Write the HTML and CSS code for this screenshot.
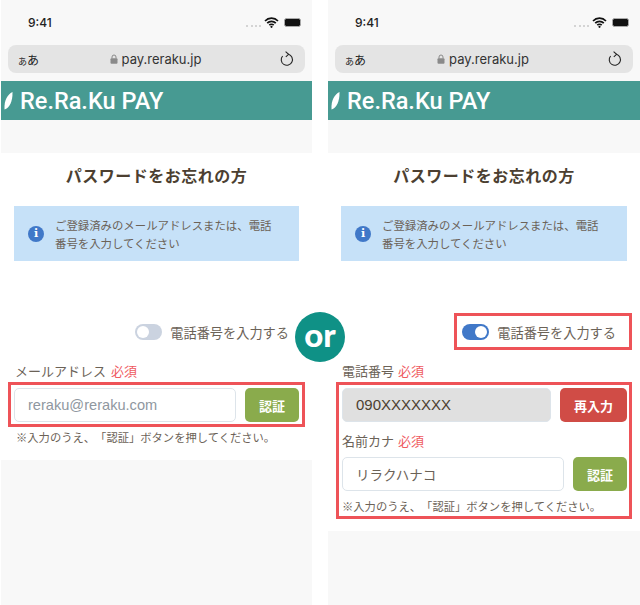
FILE: index.html
```html
<!DOCTYPE html>
<html lang="ja">
<head>
  <title>パスワードをお忘れの方</title>
  <meta name="viewport" content="width=device-width, initial-scale=1.0">
  <link rel="stylesheet" href="styles.css">
</head>
<body>
  <div class="screens">

    <!-- email -->
    <section class="phone phone-left">
      <div class="status">
        <span class="clock">9:41</span>
        <span class="status-icons">
          <span class="dots"></span>
          <svg width="15" height="11" viewBox="0 0 15 11"><path d="M1 4 A9 9 0 0 1 14 4 M3.2 6.2 A6 6 0 0 1 11.8 6.2 M5.3 8.2 A3 3 0 0 1 9.7 8.2" fill="none" stroke="#111" stroke-width="1.7"/><circle cx="7.5" cy="9.8" r="1.1" fill="#111"/></svg>
          <span class="battery"></span>
        </span>
      </div>
      <div class="urlbar">
        <span class="aa"><small>あ</small>あ</span>
        <span class="url">
          <svg width="8" height="10" viewBox="0 0 8 10"><path d="M2 4.5V3a2 2 0 0 1 4 0v1.5" fill="none" stroke="#8a8a8a" stroke-width="1"/><rect x="0.5" y="4.2" width="7" height="5.5" rx="1" fill="#8a8a8a"/></svg>
          pay.reraku.jp
        </span>
        <svg class="reload" width="14" height="16" viewBox="0 0 14 16"><path d="M8.4 3.3 A5.6 5.6 0 1 1 2.6 5" fill="none" stroke="#222" stroke-width="1.1"/><path d="M5.6 0.6 L8.6 3.3 L5.8 5.8" fill="none" stroke="#222" stroke-width="1.1"/></svg>
      </div>
      <header class="brand">
        <svg width="9" height="18" viewBox="0 0 9 18"><path d="M8.5 0 C3.5 2.5 0 8 0.5 17.5 C5.5 16 8.8 9.5 8.5 0Z" fill="#fff"/></svg>
        <span>Re.Ra.Ku PAY</span>
      </header>
      <div class="gap"></div>
      <main class="content">
        <h1>パスワードをお忘れの方</h1>
        <div class="notice">
          <span class="notice-icon">i</span>
          <p>ご登録済みのメールアドレスまたは、電話番号を入力してください</p>
        </div>
        <div class="form">
          <div class="toggle-row">
            <span class="toggle"></span>
            <span class="toggle-text">電話番号を入力する</span>
          </div>
          <div class="label">メールアドレス<em>必須</em></div>
          <div class="marked">
            <div class="field">
              <div class="input placeholder">reraku@reraku.com</div>
              <button class="btn btn-green">認証</button>
            </div>
          </div>
          <p class="hint">※入力のうえ、「認証」ボタンを押してください。</p>
        </div>
      </main>
      <div class="rest"></div>
    </section>

    <!-- phone number -->
    <section class="phone phone-right">
      <div class="status">
        <span class="clock">9:41</span>
        <span class="status-icons">
          <span class="dots"></span>
          <svg width="15" height="11" viewBox="0 0 15 11"><path d="M1 4 A9 9 0 0 1 14 4 M3.2 6.2 A6 6 0 0 1 11.8 6.2 M5.3 8.2 A3 3 0 0 1 9.7 8.2" fill="none" stroke="#111" stroke-width="1.7"/><circle cx="7.5" cy="9.8" r="1.1" fill="#111"/></svg>
          <span class="battery"></span>
        </span>
      </div>
      <div class="urlbar">
        <span class="aa"><small>あ</small>あ</span>
        <span class="url">
          <svg width="8" height="10" viewBox="0 0 8 10"><path d="M2 4.5V3a2 2 0 0 1 4 0v1.5" fill="none" stroke="#8a8a8a" stroke-width="1"/><rect x="0.5" y="4.2" width="7" height="5.5" rx="1" fill="#8a8a8a"/></svg>
          pay.reraku.jp
        </span>
        <svg class="reload" width="14" height="16" viewBox="0 0 14 16"><path d="M8.4 3.3 A5.6 5.6 0 1 1 2.6 5" fill="none" stroke="#222" stroke-width="1.1"/><path d="M5.6 0.6 L8.6 3.3 L5.8 5.8" fill="none" stroke="#222" stroke-width="1.1"/></svg>
      </div>
      <header class="brand">
        <svg width="9" height="18" viewBox="0 0 9 18"><path d="M8.5 0 C3.5 2.5 0 8 0.5 17.5 C5.5 16 8.8 9.5 8.5 0Z" fill="#fff"/></svg>
        <span>Re.Ra.Ku PAY</span>
      </header>
      <div class="gap"></div>
      <main class="content">
        <h1>パスワードをお忘れの方</h1>
        <div class="notice">
          <span class="notice-icon">i</span>
          <p>ご登録済みのメールアドレスまたは、電話番号を入力してください</p>
        </div>
        <div class="form">
          <div class="toggle-row toggle-marked">
            <span class="toggle on"></span>
            <span class="toggle-text">電話番号を入力する</span>
          </div>
          <div class="label">電話番号<em>必須</em></div>
          <div class="marked">
            <div class="field">
              <div class="input filled">090XXXXXXX</div>
              <button class="btn btn-red">再入力</button>
            </div>
            <div class="label label-inner">名前カナ<em>必須</em></div>
            <div class="field">
              <div class="input kana">リラクハナコ</div>
              <button class="btn btn-green">認証</button>
            </div>
            <p class="hint hint-inner">※入力のうえ、「認証」ボタンを押してください。</p>
          </div>
        </div>
      </main>
      <div class="rest"></div>
    </section>

    <div class="or-badge">or</div>
  </div>
</body>
</html>
```

FILE: styles.css
```css
* {
  margin: 0;
  padding: 0;
  box-sizing: border-box;
}

body {
  background: #fff;
  font-family: 'Noto Sans CJK JP', 'Noto Sans', sans-serif;
  color: #6b6257;
  overflow: hidden;
  text-spacing-trim: space-all;
}

.screens {
  position: relative;
  width: 640px;
  height: 605px;
  display: flex;
  justify-content: space-between;
  padding-left: 1px;
}

.phone {
  display: flex;
  flex-direction: column;
  background: #f8f8f8;
}

.phone-left {
  width: 311px;
}

.phone-right {
  width: 312px;
}

.status {
  height: 45px;
  display: flex;
  justify-content: space-between;
  align-items: center;
  padding: 0 11px 0 27px;
}

.clock {
  font-family: 'Inter', sans-serif;
  font-size: 12px;
  font-weight: 500;
  color: #222;
}

.status-icons {
  display: flex;
  align-items: center;
  gap: 3px;
}

.dots {
  width: 15px;
  border-top: 2px dotted #d4d4d4;
  margin-top: 7px;
}

.battery {
  position: relative;
  width: 17px;
  height: 9px;
  background: #111;
  border-radius: 2.5px;
  border: 1px solid #aaa;
  margin-left: 2px;
}

.urlbar {
  height: 28px;
  margin: 0 7px;
  padding: 0 11px 0 10px;
  background: #e4e4e4;
  border-radius: 8px;
  display: flex;
  justify-content: space-between;
  align-items: center;
}

.aa {
  font-size: 12px;
  color: #222;
}

.aa small {
  font-size: 9px;
}

.url {
  display: flex;
  align-items: center;
  gap: 4px;
  margin: 0 8px 1px 0;
  font-family: 'Inter', sans-serif;
  font-size: 13px;
  color: #333;
}

.brand {
  height: 39px;
  margin-top: 8px;
  padding-left: 3px;
  background: #479a92;
  display: flex;
  align-items: center;
  gap: 7px;
  color: #fff;
  font-family: 'Roboto', sans-serif;
  font-size: 23.5px;
  font-weight: 500;
}

.gap {
  height: 33px;
}

.content {
  background: #fff;
}

h1 {
  padding-top: 11px;
  font-size: 16px;
  line-height: 23px;
  font-weight: 700;
  text-align: center;
  color: #4c3f31;
  letter-spacing: 0.5px;
}

.notice {
  margin: 19px 13px 0;
  height: 55px;
  padding: 0 20px 0 14px;
  background: #c6e1f8;
  display: flex;
  align-items: center;
  gap: 11px;
}

.notice p {
  font-size: 11.4px;
  line-height: 18px;
}

.notice-icon {
  flex: none;
  width: 16px;
  height: 16px;
  border-radius: 50%;
  background: #4078c8;
  color: #fff;
  font-family: 'DejaVu Serif', serif;
  font-size: 11px;
  font-weight: 700;
  line-height: 16px;
  text-align: center;
}

.form {
  padding: 52px 8px 12px;
}

.phone-left .form {
  padding: 52px 7px 0;
}

.toggle-row {
  width: max-content;
  height: 37px;
  margin-left: auto;
  padding-right: 16px;
  display: flex;
  align-items: center;
  gap: 8px;
  font-size: 13.2px;
}

.toggle-text {
  padding-top: 2px;
}

.toggle-marked {
  border: 3px solid #ee5358;
  padding: 0 13px 0 5px;
}

.toggle {
  position: relative;
  width: 27px;
  height: 16px;
  border-radius: 8px;
  background: #cbd3e0;
}

.toggle::after {
  content: '';
  position: absolute;
  top: 2px;
  left: 2px;
  width: 12px;
  height: 12px;
  border-radius: 50%;
  background: #fff;
}

.toggle.on {
  background: #4078c8;
}

.toggle.on::after {
  left: 13px;
}

.label {
  padding: 12px 0 2px 7px;
  font-size: 13px;
  line-height: 18px;
}

.phone-right .label {
  padding-left: 6px;
}

.label em {
  margin-left: 5px;
  font-style: normal;
  color: #ef5a5f;
}

.phone-right .label em {
  margin-left: 4px;
}

.marked {
  border: 3px solid #ee5358;
  padding: 3px 3px 2px;
}

.phone-right .marked {
  padding: 3px 2px 0 3px;
}

.field {
  display: flex;
  gap: 9px;
}

.input {
  flex: 1;
  height: 34px;
  padding-left: 13px;
  background: #fff;
  border: 1px solid #dde4ea;
  border-radius: 5px;
  font-family: 'Liberation Sans', sans-serif;
  font-size: 14px;
  line-height: 32px;
}

.placeholder {
  color: #8f97a0;
  font-size: 14.6px;
}

.filled {
  background: #e0e0e0;
  color: #4c3f31;
  font-size: 15px;
}

.kana {
  font-family: 'Noto Sans CJK JP', sans-serif;
  font-size: 13.5px;
}

.btn {
  flex: none;
  width: 54px;
  height: 34px;
  border: 0;
  border-radius: 5px;
  color: #fff;
  font-family: inherit;
  font-size: 13px;
  font-weight: 700;
}

.btn-green {
  background: #8aab4c;
}

.btn-red {
  width: 67px;
  background: #d04c46;
}

.phone-right .label-inner {
  padding: 10px 0 7px 0;
}

.hint {
  padding: 2px 0 14px 8px;
  font-size: 11.3px;
  line-height: 17px;
  white-space: nowrap;
}

.hint-inner {
  padding: 7px 0 1px;
}

.rest {
  flex: 1;
}

.or-badge {
  position: absolute;
  left: 295px;
  top: 312px;
  width: 50px;
  height: 50px;
  border-radius: 50%;
  background: #0f9186;
  color: #fff;
  font-family: 'Lato', sans-serif;
  font-size: 33px;
  font-weight: 900;
  line-height: 45px;
  text-align: center;
}
```
